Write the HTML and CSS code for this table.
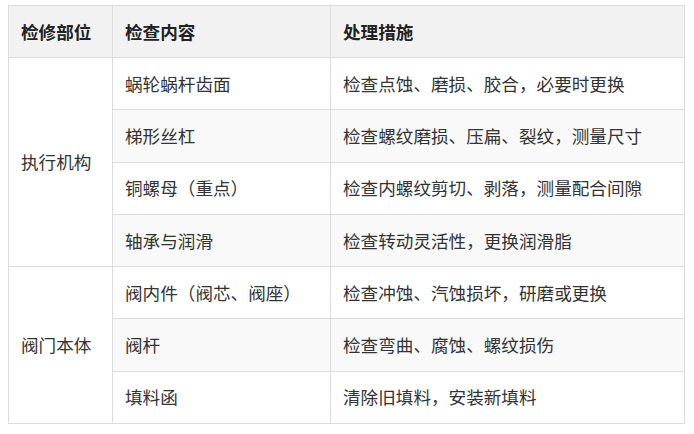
FILE: index.html
```html
<!DOCTYPE html>
<html lang="zh">
<head>
<meta charset="utf-8">
<link rel="stylesheet" href="styles.css">
</head>
<body>
<table class="spec">
  <thead>
    <tr><th class="c1">检修部位</th><th class="c2">检查内容</th><th class="c3">处理措施</th></tr>
  </thead>
  <tbody>
    <tr><td rowspan="4" class="group">执行机构</td><td>蜗轮蜗杆齿面</td><td>检查点蚀、磨损、胶合，必要时更换</td></tr>
    <tr><td>梯形丝杠</td><td>检查螺纹磨损、压扁、裂纹，测量尺寸</td></tr>
    <tr><td>铜螺母（重点）</td><td>检查内螺纹剪切、剥落，测量配合间隙</td></tr>
    <tr><td>轴承与润滑</td><td>检查转动灵活性，更换润滑脂</td></tr>
    <tr><td rowspan="3" class="group">阀门本体</td><td>阀内件（阀芯、阀座）</td><td>检查冲蚀、汽蚀损坏，研磨或更换</td></tr>
    <tr><td>阀杆</td><td>检查弯曲、腐蚀、螺纹损伤</td></tr>
    <tr><td>填料函</td><td>清除旧填料，安装新填料</td></tr>
  </tbody>
</table>
</body>
</html>
```
FILE: styles.css
```css
html, body { background: #fff; }
body {
  margin: 5px 8px;
  font-family: "Noto Sans CJK SC", "Noto Sans", sans-serif;
  font-size: 17.6px;
  color: #333;
}
.spec {
  border-collapse: collapse;
  width: 677px;
  table-layout: fixed;
}
.spec th, .spec td {
  border: 1px solid #ddd;
  padding: 0 12px;
  height: 51.3px;
  line-height: 28px;
  text-align: left;
  vertical-align: middle;
}
.spec th {
  height: 51px;
  background: #f2f2f2;
  font-weight: bold;
  color: #222;
}
.c1 { width: 79px; }
.c2 { width: 193px; }
.spec tbody tr:nth-child(even) td { background: #f9f9f9; }
.spec td.group { background: #fff; }
```
